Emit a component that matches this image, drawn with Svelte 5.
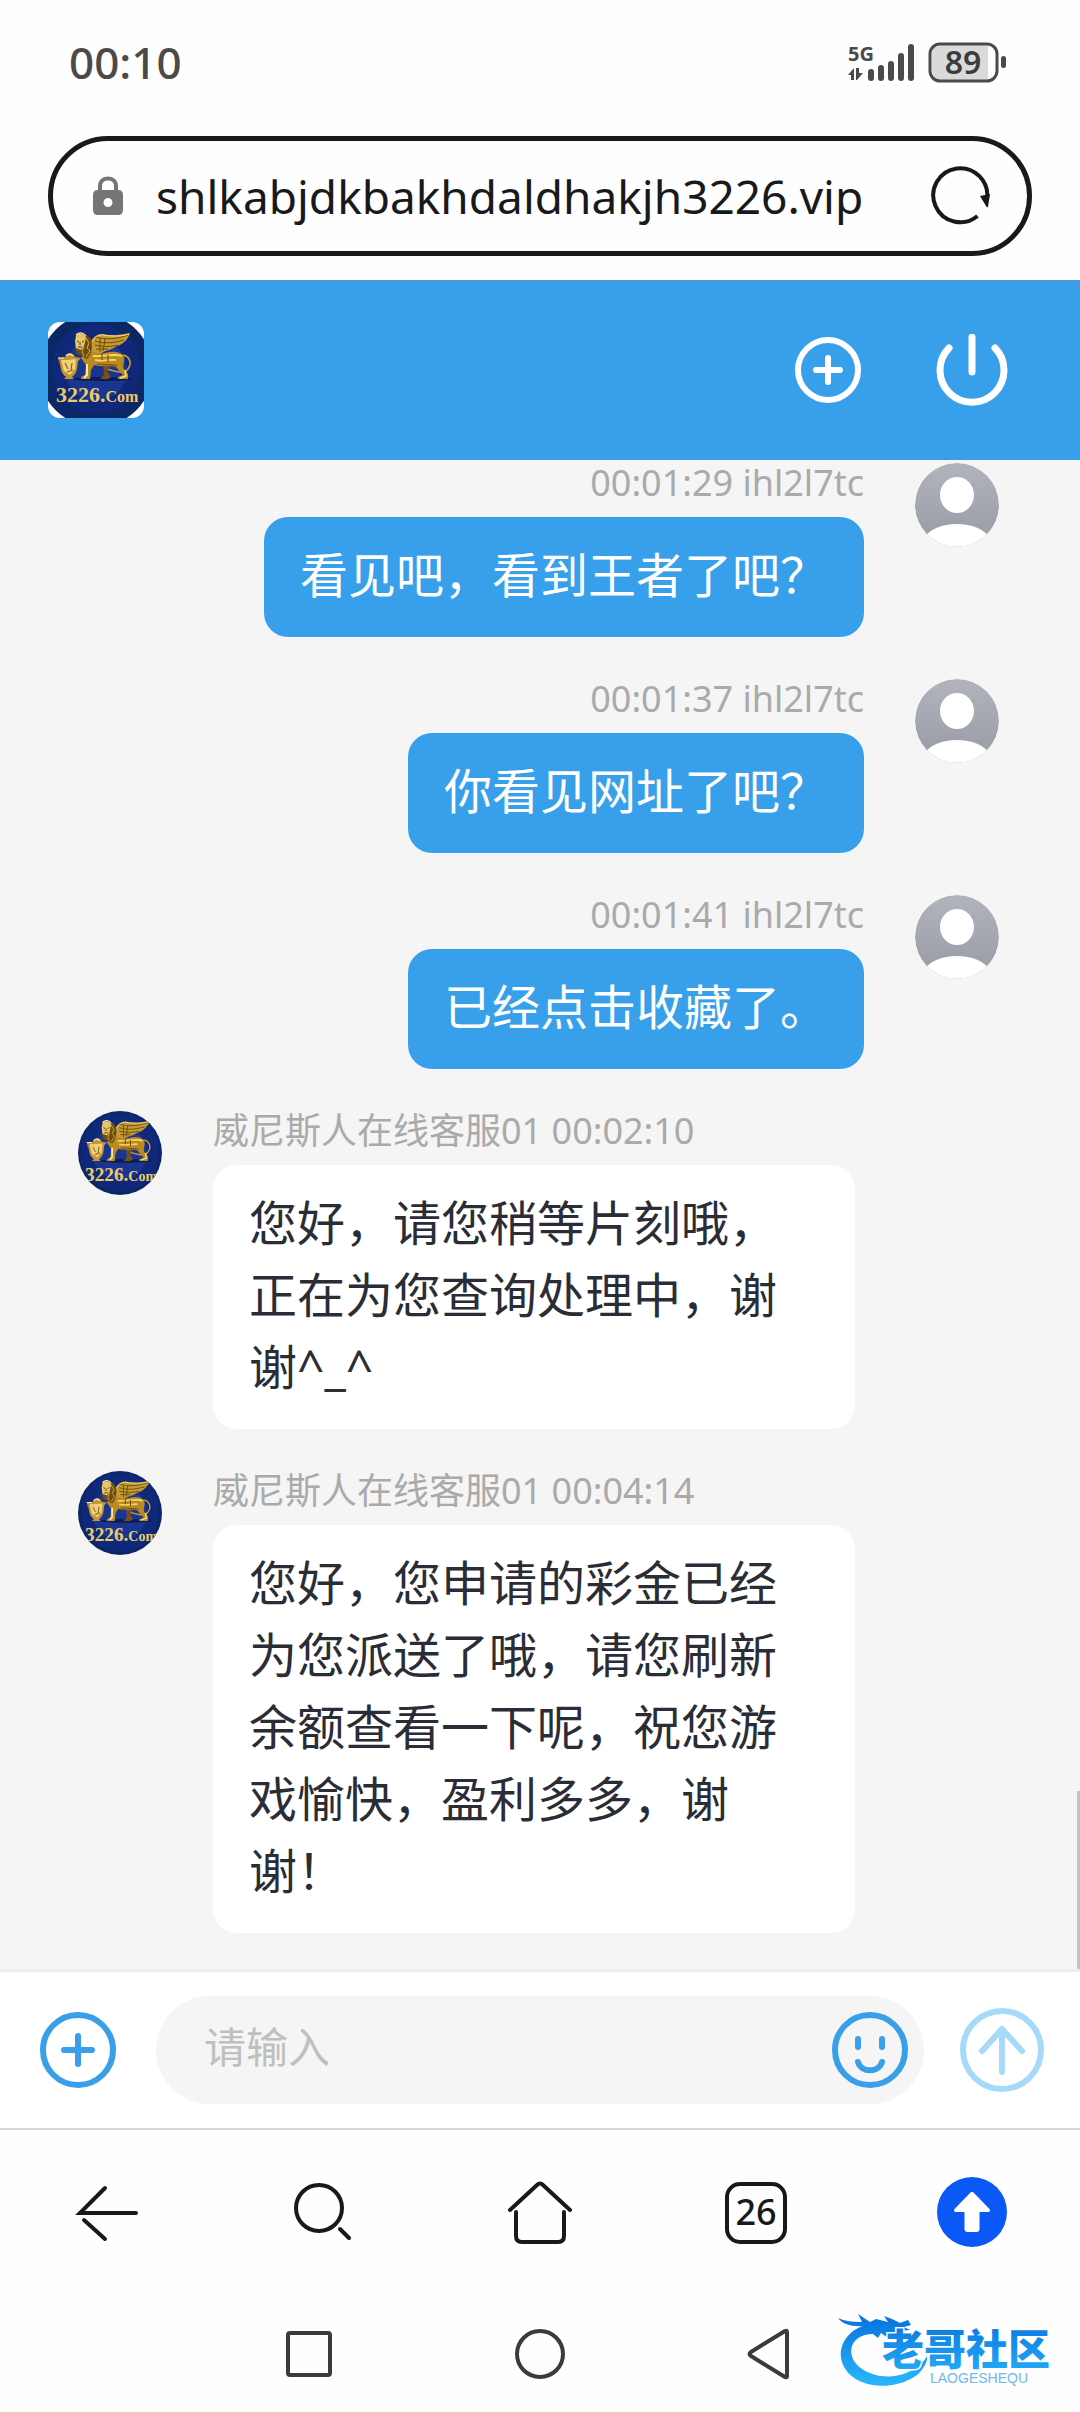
<script>
  const messages = [
    { mine: true, time: '00:01:29', name: 'ihl2l7tc', text: '看见吧，看到王者了吧？' },
    { mine: true, time: '00:01:37', name: 'ihl2l7tc', text: '你看见网址了吧？' },
    { mine: true, time: '00:01:41', name: 'ihl2l7tc', text: '已经点击收藏了。' },
    { mine: false, time: '00:02:10', name: '威尼斯人在线客服01', text: '您好，请您稍等片刻哦，正在为您查询处理中，谢谢^_^' },
    { mine: false, time: '00:04:14', name: '威尼斯人在线客服01', text: '您好，您申请的彩金已经为您派送了哦，请您刷新余额查看一下呢，祝您游戏愉快，盈利多多，谢谢！' }
  ];
  let url = $state('shlkabjdkbakhdaldhakjh3226.vip');
  let draft = $state('');
</script>

{#snippet emblem()}
  <svg class="emblem" viewBox="0 0 96 96" role="img" aria-label="3226.Com">
    <rect width="96" height="96" fill="#fff" />
    <circle cx="48" cy="48" r="57" fill="#0b2766" />
    <circle cx="48" cy="47" r="45" fill="#10287a" />
    <circle cx="48" cy="48" r="31" fill="#1a3590" />
    <ellipse cx="54" cy="57" rx="30" ry="2" fill="#0a1b57" />
    <!-- wing -->
    <path d="M42 27C42 18 46 13 54 12C62 14 73 13 82 11C80 18 74 23 67 25C64 28 58 28 54 31C49 33 44 33 42 30Z" fill="#c39a33" />
    <path d="M47 15C58 18 70 17 80 13M47 19C57 22 66 21 76 18M47 23C55 25 62 25 70 23M48 27L60 27M52 16V30M57 17L55 29" fill="none" stroke="#6c4a0b" stroke-width="1" />
    <path d="M44 20C46 14 52 12 56 13C66 15 75 14 81 12" fill="none" stroke="#f6dc83" stroke-width="1" />
    <!-- tail -->
    <path d="M72 34C80 31 85 40 80 47C76 53 68 49 58 47" fill="none" stroke="#c69a35" stroke-width="1.6" />
    <!-- far legs -->
    <path d="M55 43L63 43L59 49L63 55L60 57H52L56 53Z" fill="#7a4f13" />
    <!-- body -->
    <path d="M38 30C44 27 50 33 57 31C65 29 73 29 76 35C77 40 74 43 76 47L80 52L80 57H70L70 55L75 53L68 45C61 43 53 45 46 43L43 48L42 57H33L33 55L37 53L38 43L33 36Z" fill="#b98a20" />
    <path d="M45 34C55 35 66 31 74 34M47 38C56 40 63 37 68 38" fill="none" stroke="#f5d768" stroke-width="1.8" />
    <path d="M49 42C57 43 64 42 69 44M54 32V38M60 33V40" fill="none" stroke="#77500e" stroke-width="1.2" />
    <path d="M39 42L39 53L36 56" fill="none" stroke="#ffe8a2" stroke-width="2" />
    <path d="M77 48L78 54L72 56" fill="none" stroke="#ffe28c" stroke-width="1.5" />
    <!-- mane and head -->
    <path d="M28 13C31 10 39 11 43 17C45 24 44 32 39 37L34 34L29 32L27 26Z" fill="#6f4c13" />
    <path d="M28 14C31 10 37 12 38 16L36 24L33 28L28 26L27 19Z" fill="#e6c56f" />
    <path d="M29 19L31 20M34 20L36 19M30 25L34 25M32 20V23" stroke="#4e330b" stroke-width="1" />
    <path d="M38 16L41 21L39 26L42 29L38 35M36 25L34 30L36 34" fill="none" stroke="#d9ab3b" stroke-width="1" />
    <path d="M28 13C31 10 35 10 38 14" fill="none" stroke="#ffe9a5" stroke-width="1.2" />
    <!-- shield -->
    <path d="M10 36L17 35C19 30 25 30 27 35L33 36L30 39L29 47C28 52 25 54 24 55L26 57H16L18 55C14 52 13 48 12 42Z" fill="#c49532" />
    <path d="M13 38L19 38L28 37L27 47L22 53L16 49Z" fill="#efd17a" />
    <path d="M17 41L20 47M24 41L23 48M19 50L25 48M12 38L11 41" fill="none" stroke="#8f6418" stroke-width="1.2" />
    <path d="M18 34C20 31 23 32 25 34M10 36H16" fill="none" stroke="#ffeaaa" stroke-width="1.2" />
    <text x="8" y="80" font-size="22" font-family="'Liberation Serif', serif" font-weight="700" fill="#eccb6a">3226.<tspan font-size="16">Com</tspan></text>
  </svg>
{/snippet}

{#snippet person()}
  <svg viewBox="0 0 84 84" aria-hidden="true">
    <defs>
      <linearGradient id="person-bg" x1="0" y1="0" x2="0" y2="1">
        <stop offset="0" stop-color="#b1b4bc" />
        <stop offset="1" stop-color="#989ba4" />
      </linearGradient>
      <clipPath id="person-clip"><circle cx="42" cy="42" r="42" /></clipPath>
    </defs>
    <g clip-path="url(#person-clip)">
      <rect width="84" height="84" fill="url(#person-bg)" />
      <ellipse cx="42" cy="32" rx="17" ry="18" fill="#fff" />
      <path d="M8 76C20 56 64 56 76 76V84H8Z" fill="#fff" />
    </g>
  </svg>
{/snippet}

<div class="phone">
  <div class="status">
    <span class="clock">00:10</span>
    <svg width="162" height="42" viewBox="0 0 162 42" role="img" aria-label="5G 89%">
      <g fill="#4a4a4a">
        <text x="0" y="20" font-size="20" font-weight="700">5G</text>
        <path d="M0 34L6 27V39H3V34ZM8 27H11V32H15L9 39H8Z" />
        <rect x="20" y="28" width="6" height="12" rx="3" />
        <rect x="30" y="24" width="6" height="16" rx="3" />
        <rect x="40" y="20" width="6" height="20" rx="3" />
        <rect x="50" y="12" width="6" height="28" rx="3" />
        <rect x="60" y="3" width="6" height="37" rx="3" />
        <rect x="153" y="15" width="5" height="12" rx="2.5" />
      </g>
      <path d="M94 4H140V39H94Q84 39 84 29V14Q84 4 94 4Z" fill="#dadada" />
      <rect x="82" y="3" width="67" height="37" rx="10" fill="none" stroke="#4a4a4a" stroke-width="3" />
      <text x="115" y="33" font-size="32" font-weight="600" text-anchor="middle" fill="#3c3c3c">89</text>
    </svg>
  </div>

  <form class="address" onsubmit={(e) => e.preventDefault()}>
    <svg width="32" height="40" viewBox="0 0 32 40" aria-hidden="true">
      <path d="M8 16V10C8 0 24 0 24 10V16" fill="none" stroke="#757575" stroke-width="4" />
      <path fill-rule="evenodd" d="M6 14H26Q31 14 31 19V34Q31 39 26 39H6Q1 39 1 34V19Q1 14 6 14ZM16 22A4 4 0 1 0 16 31A4 4 0 1 0 16 22Z" fill="#757575" />
    </svg>
    <input type="text" aria-label="网址" bind:value={url} />
    <button type="button" aria-label="刷新">
      <svg width="62" height="62" viewBox="0 0 62 62">
        <path d="M47.500 51A27 27 0 1 1 57 34" fill="none" stroke="#18191a" stroke-width="4" />
        <path d="M50 31L60 29L58 42Q57 43 56 41Z" fill="#18191a" />
      </svg>
    </button>
  </form>

  <header>
    <div class="logo">{@render emblem()}</div>
    <button type="button" aria-label="新建">
      <svg width="72" height="72" viewBox="0 0 72 72" fill="none" stroke="#fff" stroke-width="6" stroke-linecap="round">
        <circle cx="36" cy="36" r="30" />
        <path d="M36 24V48M24 36H48" />
      </svg>
    </button>
    <button type="button" aria-label="退出">
      <svg width="72" height="72" viewBox="0 0 72 72" fill="none" stroke="#fff" stroke-width="7" stroke-linecap="round">
        <path d="M13 14A32 32 0 1 0 59 14M36 3V38" />
      </svg>
    </button>
  </header>

  <main>
    {#each messages as m}
      <article class:mine={m.mine}>
        <div class="avatar">
          {#if m.mine}{@render person()}{:else}{@render emblem()}{/if}
        </div>
        <div class="body">
          <div class="meta">{m.mine ? `${m.time} ${m.name}` : `${m.name} ${m.time}`}</div>
          <p>{m.text}</p>
        </div>
      </article>
    {/each}
    <div class="thumb"></div>
  </main>

  <form class="composer" onsubmit={(e) => e.preventDefault()}>
    <button type="button" aria-label="更多">
      <svg width="76" height="76" viewBox="0 0 76 76" fill="none" stroke="#389fe8" stroke-width="6" stroke-linecap="round">
        <circle cx="38" cy="38" r="35" />
        <path d="M38 24V52M24 38H52" />
      </svg>
    </button>
    <div class="field">
      <input type="text" aria-label="消息" placeholder="请输入" bind:value={draft} />
      <button type="button" aria-label="表情">
        <svg width="76" height="76" viewBox="0 0 76 76" fill="none" stroke="#389fe8" stroke-width="6" stroke-linecap="round">
          <circle cx="38" cy="38" r="35" />
          <path d="M26 27V35M50 27V35M26 50C29 61 47 61 50 50" />
        </svg>
      </button>
    </div>
    <button type="submit" aria-label="发送">
      <svg width="84" height="84" viewBox="0 0 84 84" fill="none" stroke="#a6d9fa" stroke-width="6" stroke-linecap="round" stroke-linejoin="round">
        <circle cx="42" cy="42" r="39" />
        <path d="M42 64V22M22 43L42 21L62 43" />
      </svg>
    </button>
  </form>

  <nav class="browser" aria-label="浏览器">
    <button type="button" aria-label="后退">
      <svg width="72" height="72" viewBox="0 0 72 72" fill="none" stroke="#18191a" stroke-width="4" stroke-linecap="round">
        <path d="M64 36H8L33 11M12 43L33 62" />
      </svg>
    </button>
    <button type="button" aria-label="搜索">
      <svg width="72" height="72" viewBox="0 0 72 72" fill="none" stroke="#18191a" stroke-width="4" stroke-linecap="round">
        <circle cx="31" cy="31" r="23" />
        <path d="M52 52L61 61" />
      </svg>
    </button>
    <button type="button" aria-label="主页">
      <svg width="72" height="72" viewBox="0 0 72 72" fill="none" stroke="#18191a" stroke-width="4" stroke-linecap="round">
        <path d="M6 33L33 8Q36 5 39 8L66 33M12 35V59Q12 65 18 65H54Q60 65 60 59V35" />
      </svg>
    </button>
    <button type="button" aria-label="标签页"><span class="tabs">26</span></button>
    <button type="button" aria-label="回到顶部">
      <svg width="72" height="72" viewBox="0 0 72 72">
        <circle cx="36" cy="35" r="35" fill="#0a59f7" />
        <path d="M34.500 15.500Q36 14 37.500 15.500L53.500 32Q55 35 52 35H43.500V52Q43.500 55 40.500 55H31.500Q28.500 55 28.500 52V35H20Q17 35 18.500 32Z" fill="#fff" />
      </svg>
    </button>
  </nav>

  <nav class="system" aria-label="系统">
    <button type="button" aria-label="最近任务">
      <svg width="56" height="56" viewBox="0 0 56 56" fill="none" stroke="#3b3b3b" stroke-width="4"><rect x="7" y="7" width="42" height="42" rx="2" /></svg>
    </button>
    <button type="button" aria-label="桌面">
      <svg width="56" height="56" viewBox="0 0 56 56" fill="none" stroke="#3b3b3b" stroke-width="4"><circle cx="28" cy="28" r="23" /></svg>
    </button>
    <button type="button" aria-label="返回">
      <svg width="56" height="56" viewBox="0 0 56 56" fill="none" stroke="#3b3b3b" stroke-width="4" stroke-linejoin="round"><path d="M44 6V50Q44 52 42 51L8 30Q5 28 8 26L42 5Q44 4 44 6Z" /></svg>
    </button>
    <svg class="watermark" width="230" height="80" viewBox="0 0 230 80" role="img" aria-label="老哥社区">
      <defs>
        <linearGradient id="wm" x1="0" y1="0" x2="0" y2="80" gradientUnits="userSpaceOnUse">
          <stop offset="0.150" stop-color="#0a78e0" />
          <stop offset="0.900" stop-color="#27b4fb" />
        </linearGradient>
      </defs>
      <g fill="url(#wm)">
        <path d="M25 16C6 22 -4 44 8 60C20 78 54 81 76 67C84 62 90 52 89 46C83 58 64 69 42 66C21 62 10 49 14 36C17 28 25 24 35 24L40 28L43 23L50 28L54 23L62 29L69 26L60 21L72 20L66 17L73 15L70 10L62 13L54 9L46 6L50 12L38 9L32 12L20 4L24 12C15 12 6 11 0 8C4 14 14 17 25 16Z" />
        <text x="44" y="55" font-size="42" font-weight="900" stroke="#fefefe" stroke-width="3" paint-order="stroke">老哥社区</text>
        <text x="92" y="73" font-size="14" font-family="'Liberation Sans', sans-serif" fill="#6db9ec">LAOGESHEQU</text>
      </g>
    </svg>
  </nav>
</div>

<style>
  :global(body) {
    margin: 0;
    background: #fefefe;
  }
  .phone {
    font-family: 'Noto Sans', 'Noto Sans CJK SC', sans-serif;
    display: flex;
    flex-direction: column;
    background: #fefefe;
  }
  svg {
    display: block;
    flex: none;
  }
  button {
    border: 0;
    padding: 0;
    background: none;
    font: inherit;
    cursor: pointer;
  }
  input {
    flex: 1;
    min-width: 0;
    border: 0;
    padding: 0;
    outline: 0;
    background: none;
    font-family: inherit;
  }
  .status {
    height: 124px;
    padding: 0 70px 0 69px;
    display: flex;
    align-items: center;
    justify-content: space-between;
  }
  .clock {
    font-size: 44px;
    line-height: 60px;
    color: #4a4a4a;
    font-weight: 500;
  }
  .address {
    margin: 12px 48px 24px;
    height: 120px;
    box-sizing: border-box;
    border: 5px solid #18191a;
    border-radius: 60px;
    padding: 0 35px 0 39px;
    display: flex;
    align-items: center;
    gap: 32px;
  }
  .address input {
    font-size: 46px;
    line-height: 64px;
    color: #18191a;
  }
  header {
    height: 180px;
    padding: 0 72px 0 48px;
    box-sizing: border-box;
    box-shadow: inset 0 1px #5a97c4;
    background: #389fea;
    display: flex;
    align-items: center;
    gap: 72px;
  }
  .logo {
    width: 96px;
    height: 96px;
    margin-right: auto;
    border-radius: 12px;
    overflow: hidden;
  }
  .emblem {
    width: 100%;
    height: 100%;
  }
  main {
    position: relative;
    background: #f5f5f5;
    padding: 3px 81px 36px 78px;
    display: flex;
    flex-direction: column;
    gap: 42px;
  }
  article {
    display: flex;
    gap: 51px;
    padding-right: 144px;
  }
  .mine {
    flex-direction: row-reverse;
    padding-right: 0;
  }
  .avatar {
    flex: none;
    width: 84px;
    height: 84px;
    border-radius: 50%;
    overflow: hidden;
  }
  .body {
    display: flex;
    flex-direction: column;
    align-items: flex-start;
    gap: 14px;
    min-width: 0;
  }
  .mine .body {
    align-items: flex-end;
  }
  .meta {
    font-size: 36px;
    line-height: 40px;
    color: #aaa;
  }
  p {
    margin: 0;
    padding: 22px 36px 26px;
    border-radius: 24px;
    background: #fff;
    color: #2b2d36;
    font-size: 48px;
    line-height: 72px;
  }
  .mine p {
    background: #389fea;
    color: #fff;
  }
  .thumb {
    position: absolute;
    right: 0;
    bottom: 0;
    width: 3px;
    height: 178px;
    background: #c4c4c4;
  }
  .composer {
    border-top: 3px solid #ececec;
    border-bottom: 2px solid #d6d6d6;
    padding: 24px 36px 24px 40px;
    display: flex;
    align-items: center;
    gap: 36px;
    background: #fff;
  }
  .field {
    flex: 1;
    height: 108px;
    margin-left: 4px;
    padding: 0 16px 0 48px;
    box-sizing: border-box;
    border-radius: 54px;
    background: #f5f5f5;
    display: flex;
    align-items: center;
  }
  .field input {
    font-size: 42px;
    line-height: 60px;
    padding-bottom: 6px;
    color: #2b2d36;
  }
  .field input::placeholder {
    color: #bfbfbf;
    opacity: 1;
  }
  .browser {
    height: 166px;
    display: grid;
    grid-template-columns: repeat(5, 1fr);
    align-items: center;
    justify-items: center;
  }
  .tabs {
    display: block;
    width: 62px;
    height: 62px;
    box-sizing: border-box;
    border: 4px solid #18191a;
    border-radius: 15px;
    font-size: 36px;
    line-height: 52px;
    text-align: center;
    font-weight: 500;
    color: #18191a;
  }
  .system {
    position: relative;
    height: 116px;
    display: flex;
    justify-content: center;
    align-items: center;
    gap: 175px;
  }
  .watermark {
    position: absolute;
    right: 12px;
    bottom: 22px;
  }
</style>
